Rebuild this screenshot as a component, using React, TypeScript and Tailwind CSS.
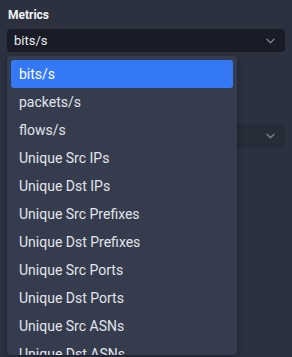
import React from "react";

const items = [
  "bits/s",
  "packets/s",
  "flows/s",
  "Unique Src IPs",
  "Unique Dst IPs",
  "Unique Src Prefixes",
  "Unique Dst Prefixes",
  "Unique Src Ports",
  "Unique Dst Ports",
  "Unique Src ASNs",
  "Unique Dst ASNs",
];

function Chevron() {
  return (
    <svg width="9" height="6" viewBox="0 0 9 6" fill="none">
      <path d="M1 1.2l3.5 3.5 3.5-3.5" stroke="#7c8293" strokeWidth="1.3" strokeLinecap="round" strokeLinejoin="round" />
    </svg>
  );
}

export default function App() {
  return (
    <div
      className="relative w-[292px] h-[357px] overflow-hidden bg-[#2c3140] text-white"
      style={{ fontFamily: "Roboto, 'Noto Sans', sans-serif" }}
    >
      <div className="px-[7px] pt-[7px]">
        <div className="text-[12px] font-bold leading-[16px] pl-[1px] text-[#f1f2f5]">Metrics</div>
        <div className="mt-[6px] h-[23px] rounded-[4px] bg-[#191c27] flex items-center justify-between pl-[7px] pr-[10px]">
          <span className="text-[13px] text-[#e8eaee]">bits/s</span>
          <Chevron />
        </div>
        <div className="mt-[72px] h-[24px] rounded-[4px] bg-[#272c39] flex items-center justify-end pr-[10px]">
          <Chevron />
        </div>
      </div>

      <div className="absolute left-[7px] top-[56px] w-[230px] h-[299px] rounded-[4px] bg-[#353c4e] overflow-hidden p-[4px] shadow-[0_2px_6px_rgba(0,0,0,0.35)]">
        {items.map((it, i) => (
          <div
            key={it}
            className={
              i === 0
                ? "h-[28px] rounded-[3px] bg-[#3478f6] flex items-center pl-[8px] text-[14px] text-white"
                : "h-[28px] flex items-center pl-[8px] pt-[1px] text-[14px] text-[#e3e5ea]"
            }
          >
            {it}
          </div>
        ))}
      </div>
    </div>
  );
}
